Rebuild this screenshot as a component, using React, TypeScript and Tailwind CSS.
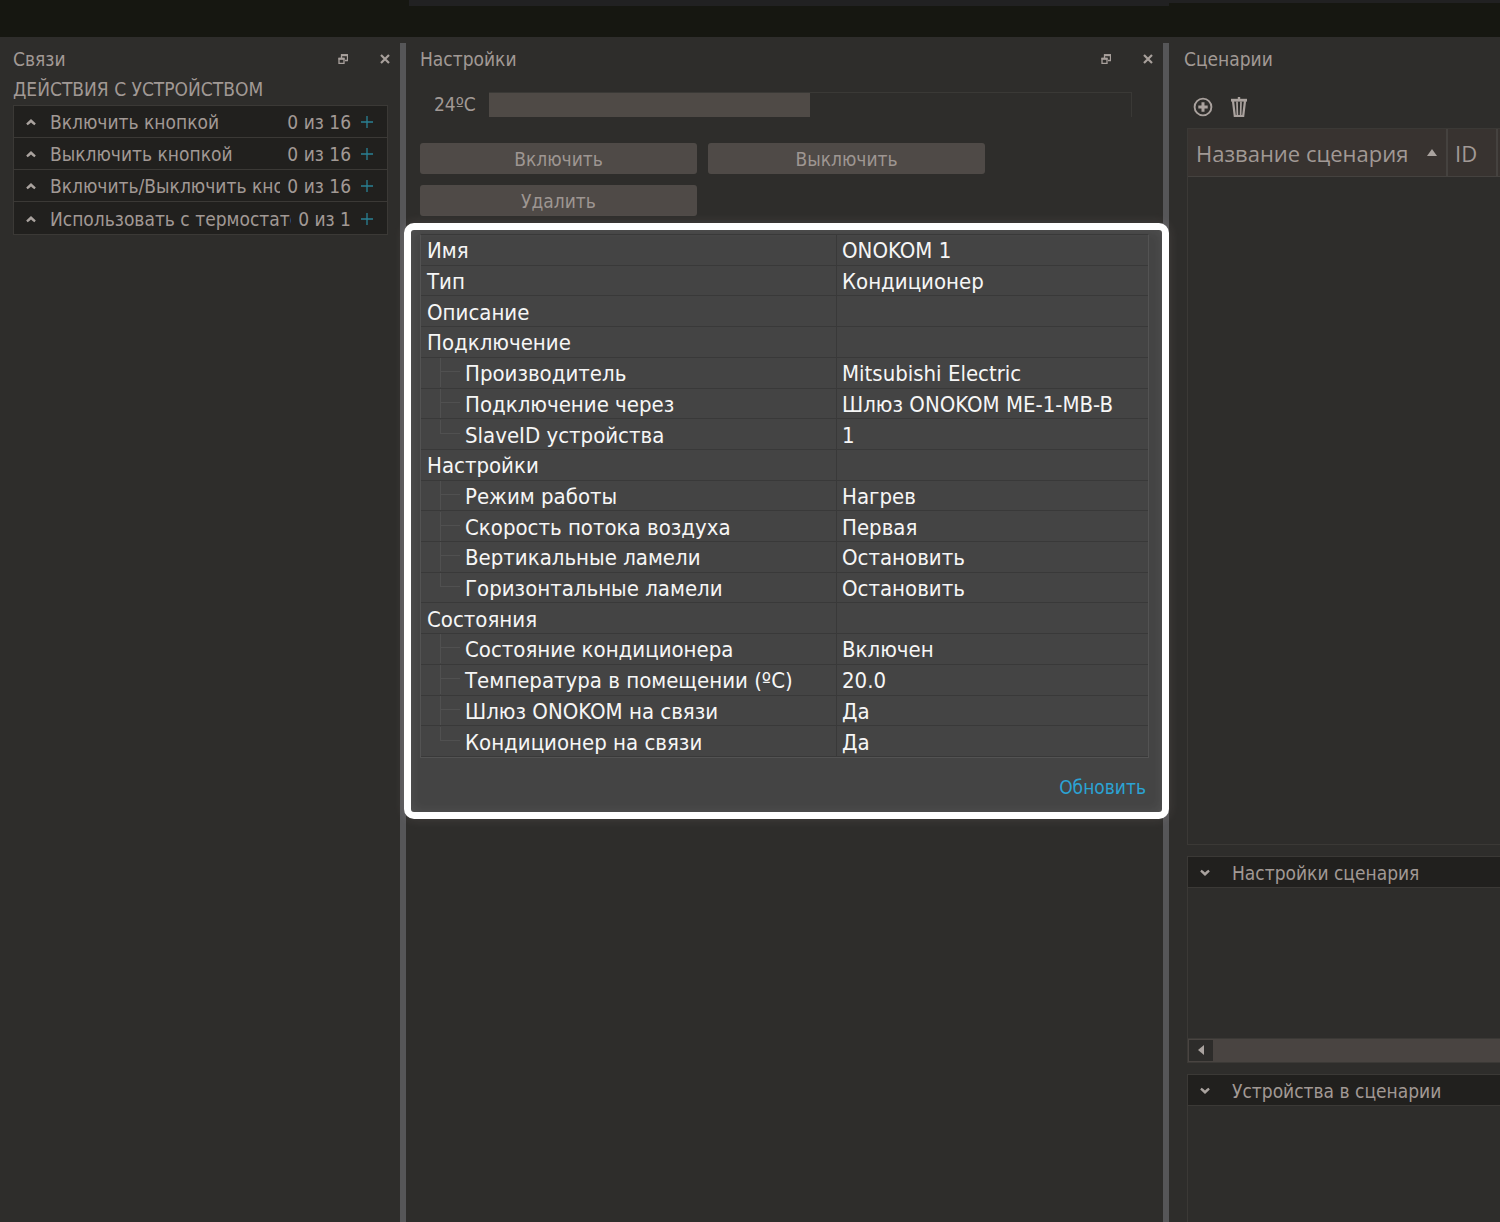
import { useState } from "react";

const LINKS = [
  { title: "Включить кнопкой", count: "0 из 16" },
  { title: "Выключить кнопкой", count: "0 из 16" },
  { title: "Включить/Выключить кнопкой", count: "0 из 16" },
  { title: "Использовать с термостатом", count: "0 из 1" },
];

type Row = { name: string; value?: string; child?: boolean; last?: boolean };

const ROWS: Row[] = [
  { name: "Имя", value: "ONOKOM 1" },
  { name: "Тип", value: "Кондиционер" },
  { name: "Описание" },
  { name: "Подключение" },
  { name: "Производитель", value: "Mitsubishi Electric", child: true },
  { name: "Подключение через", value: "Шлюз ONOKOM ME-1-MB-B", child: true },
  { name: "SlaveID устройства", value: "1", child: true, last: true },
  { name: "Настройки" },
  { name: "Режим работы", value: "Нагрев", child: true },
  { name: "Скорость потока воздуха", value: "Первая", child: true },
  { name: "Вертикальные ламели", value: "Остановить", child: true },
  { name: "Горизонтальные ламели", value: "Остановить", child: true, last: true },
  { name: "Состояния" },
  { name: "Состояние кондиционера", value: "Включен", child: true },
  { name: "Температура в помещении (ºC)", value: "20.0", child: true },
  { name: "Шлюз ONOKOM на связи", value: "Да", child: true },
  { name: "Кондиционер на связи", value: "Да", child: true, last: true },
];

const MIN_TEMP = 16;
const MAX_TEMP = 32;

function Chevron({ down = false }: { down?: boolean }) {
  return (
    <svg viewBox="0 0 10 8" className={`w-[10px] h-2 shrink-0 ${down ? "rotate-180" : ""}`} fill="#aaa39f">
      <path d="M5 1 9.8 5.6 8.4 7.2 6.6 6 5 4.6 3.4 6 1.6 7.2.2 5.6z" />
    </svg>
  );
}

function WindowButtons() {
  return (
    <div className="flex items-center gap-8 text-[#a8a09c]">
      <button aria-label="Открепить">
        <svg viewBox="0 0 10 10" className="w-[10px] h-[10px]" fill="none" stroke="currentColor" strokeWidth="1.3">
          <path d="M3.5 4V1h6v5.5H7" />
          <path d="M3 1.2h7" strokeWidth="2" />
          <path d="M1 4.5h5v5H1z" />
          <path d="M.5 4.8h6" strokeWidth="2" />
        </svg>
      </button>
      <button aria-label="Закрыть">
        <svg viewBox="0 0 10 10" className="w-[10px] h-[10px]" fill="none" stroke="currentColor" strokeWidth="2.2">
          <path d="m1 1 8 8M9 1 1 9" />
        </svg>
      </button>
    </div>
  );
}

function PanelTitle({ title, buttons = true }: { title: string; buttons?: boolean }) {
  return (
    <div className="flex items-center justify-between h-[30px]">
      <h2>{title}</h2>
      {buttons && <WindowButtons />}
    </div>
  );
}

function Splitter() {
  return <div className="mt-[6px] bg-[#565658]" />;
}

function LinksPanel() {
  return (
    <section className="min-w-0 pt-[7px] pl-[13px] pr-[10px]">
      <PanelTitle title="Связи" />
      <h3 className="leading-[30px]">ДЕЙСТВИЯ С УСТРОЙСТВОМ</h3>
      <ul className="mt-[1px] mr-[2px] border border-[#3b3936] bg-[#21201e] divide-y divide-[#3b3936]">
        {LINKS.map((link) => (
          <li key={link.title} className="flex items-center h-8 pt-[1px] pl-3 pr-[14px]">
            <button aria-label="Развернуть" className="mr-[14px]"><Chevron /></button>
            <span className="flex-1 min-w-0 overflow-hidden whitespace-nowrap">{link.title}</span>
            <span className="ml-[7px] whitespace-nowrap">{link.count}</span>
            <button aria-label="Добавить" className="ml-[10px]">
              <svg viewBox="0 0 12 12" className="w-3 h-3" stroke="#2a8094" strokeWidth="1.3">
                <path d="M6 0v12M0 6h12" />
              </svg>
            </button>
          </li>
        ))}
      </ul>
    </section>
  );
}

function TreeBranch({ last }: { last?: boolean }) {
  return (
    <span className="flex flex-col w-5 h-[29px] ml-[13px] mr-[5px]">
      <span className="h-[14px] border-l border-b border-[#505050]" />
      {!last && <span className="flex-1 border-l border-[#505050]" />}
    </span>
  );
}

function PropertiesTable() {
  return (
    <table className="w-full h-[524px] table-fixed border-separate border-spacing-0 border border-[#535353] border-t-[#393939] text-[22px] leading-[31px] text-[#f6f6f6]">
      <colgroup>
        <col className="w-[416px]" />
        <col />
      </colgroup>
      <tbody>
        {ROWS.map((row) => (
          <tr key={row.name}>
            <th className="p-0 pl-[6px] border-b border-r border-[#393939] font-normal text-left whitespace-nowrap">
              <div className="flex h-[29px]">
                {row.child && <TreeBranch last={row.last} />}
                {row.name}
              </div>
            </th>
            <td className="p-0 pl-[5px] border-b border-[#393939] whitespace-nowrap">
              <div className="h-[29px]">{row.value}</div>
            </td>
          </tr>
        ))}
      </tbody>
    </table>
  );
}

function SettingsPanel() {
  const [temp, setTemp] = useState(24);
  const filled = ((temp - MIN_TEMP) / (MAX_TEMP - MIN_TEMP)) * 100;
  const button = "w-[277px] h-[31px] rounded-[3px] bg-[#4f4a47] text-[#9e9692]";

  return (
    <section className="min-w-0 pt-[7px]">
      <div className="pl-[14px] pr-[10px]">
        <PanelTitle title="Настройки" />
        <div className="flex items-center mt-[17px] pl-[14px] pr-[21px] h-[26px]">
          <label htmlFor="temp" className="w-[55px] leading-[30px]">{temp}ºC</label>
          <input
            id="temp"
            type="range"
            min={MIN_TEMP}
            max={MAX_TEMP}
            value={temp}
            onChange={(e) => setTemp(Number(e.target.value))}
            className="flex-1 min-w-0 h-[25px] appearance-none border-t border-r border-[#3a3936] [&::-webkit-slider-thumb]:appearance-none [&::-webkit-slider-thumb]:w-1"
            style={{ background: `linear-gradient(to right, #4f4a46 ${filled}%, transparent ${filled}%)` }}
          />
        </div>
        <div className="flex flex-wrap gap-[11px] mt-[26px] pr-[160px]">
          <button className={button}>Включить</button>
          <button className={button}>Выключить</button>
          <button className={button}>Удалить</button>
        </div>
      </div>

      <div className="relative mt-[7px] -ml-[2px] -mr-[6px] h-[596px] border-[7px] border-white rounded-[10px] bg-[#444] shadow-[0_0_12px_#ffe8e01c,inset_0_0_12px_#ffffff14]">
        <div className="pt-[4px] pl-[9px] pr-[13px]">
          <PropertiesTable />
          <div className="flex justify-end mt-[15px] pr-[3px]">
            <button className="leading-[28px] text-[#2ba3d4]">Обновить</button>
          </div>
        </div>
      </div>
    </section>
  );
}

function ScenarioSection({ title }: { title: string }) {
  return (
    <h3 className="flex items-center h-[31px] pt-[2px] pl-3 gap-[22px] bg-[#21201e] border-b border-[#3b3936]">
      <button aria-label="Свернуть"><Chevron down /></button>
      {title}
    </h3>
  );
}

function ScenariosPanel() {
  return (
    <section className="flex flex-col min-w-0 pt-[7px] pl-[15px] overflow-hidden">
      <PanelTitle title="Сценарии" buttons={false} />
      <div className="flex items-center gap-[18px] h-9 mt-[15px] pl-[9px] text-[#aaa29e]">
        <button aria-label="Добавить сценарий">
          <svg viewBox="0 0 20 20" className="w-5 h-5" fill="none" stroke="currentColor">
            <circle cx="10" cy="10" r="8.4" strokeWidth="1.9" />
            <path d="M10 5.3v9.4M5.3 10h9.4" strokeWidth="3" />
          </svg>
        </button>
        <button aria-label="Удалить сценарий">
          <svg viewBox="0 0 16 20" className="w-4 h-5" fill="none" stroke="currentColor">
            <path d="M0 3.2h16" strokeWidth="2.8" />
            <path d="M8 0v3" strokeWidth="2.4" />
            <path d="M2 4l1.8 15h8.4L14 4" strokeWidth="2.2" />
            <path d="M6 4.5l.4 14M10 4.5l-.4 14" strokeWidth="1.7" />
          </svg>
        </button>
      </div>

      <div className="flex flex-col flex-1 gap-[11px] mt-[3px] ml-[3px]">
        <div className="flex-[718] basis-0 border border-r-0 border-[#3b3936]">
          <table className="w-full table-fixed border-separate border-spacing-0 font-['Open_Sans','Noto_Sans',sans-serif] text-[22px]">
            <thead>
              <tr className="h-12 bg-[#383330]">
                <th className="p-0 pl-2 border-r-2 border-b border-[#45423f] font-normal">
                  <div className="flex items-center justify-between pr-[9px] whitespace-nowrap">
                    Название сценария
                    <svg viewBox="0 0 10 8" className="w-[10px] h-2" fill="#aaa39f">
                      <path d="M5 0l5 7H0z" />
                    </svg>
                  </div>
                </th>
                <th className="w-[50px] p-0 pl-[7px] border-r-2 border-b border-[#45423f] font-normal text-left">ID</th>
                <th className="w-[2px] p-0 border-b border-[#45423f]" />
              </tr>
            </thead>
          </table>
        </div>

        <div className="flex flex-col flex-[206] basis-0 border border-r-0 border-[#3b3936]">
          <ScenarioSection title="Настройки сценария" />
          <div className="flex-1" />
          <div className="flex h-6 p-[1px] pr-0 border-t border-[#3b3936] bg-[#494441]">
            <button aria-label="Прокрутить влево" className="flex items-center justify-center w-6 bg-[#2d2c2a]">
              <svg viewBox="0 0 6 10" className="w-[6px] h-[10px]" fill="#aaa39f">
                <path d="M0 5l6-5v10z" />
              </svg>
            </button>
          </div>
        </div>

        <div className="flex-[148] basis-0 border border-r-0 border-b-0 border-[#3b3936]">
          <ScenarioSection title="Устройства в сценарии" />
        </div>
      </div>
    </section>
  );
}

export default function App() {
  return (
    <div className="flex flex-col min-h-screen bg-[#2e2d2b] text-[#a19995] text-[19px] leading-[28px] font-['DejaVu_Sans_Condensed','DejaVu_Sans',sans-serif]">
      <header className="grid grid-cols-[409fr_760fr_331fr] items-start h-[37px] bg-[#161711]">
        <div />
        <div className="h-[6px] bg-[#212122]" />
        <div className="h-[3px] bg-[#212122]" />
      </header>
      <main className="grid flex-1 grid-cols-[400fr_6px_757fr_6px_331fr]">
        <LinksPanel />
        <Splitter />
        <SettingsPanel />
        <Splitter />
        <ScenariosPanel />
      </main>
    </div>
  );
}
